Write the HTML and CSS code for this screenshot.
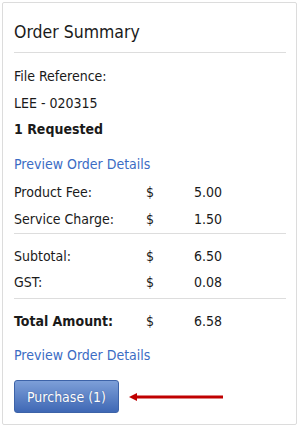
FILE: index.html
```html
<!DOCTYPE html>
<html>
<head>
<meta charset="utf-8">
<link rel="stylesheet" href="styles.css">
</head>
<body>
<div class="card">
  <h2 class="title">Order Summary</h2>
  <div class="info">
    <div class="line">File Reference:</div>
    <div class="line">LEE - 020315</div>
    <div class="line bold">1 Requested</div>
  </div>
  <a class="link first" href="#">Preview Order Details</a>
  <div class="group g1">
    <div class="row"><span class="lbl">Product Fee:</span><span class="cur">$</span><span class="amt">5.00</span></div>
    <div class="row"><span class="lbl">Service Charge:</span><span class="cur">$</span><span class="amt">1.50</span></div>
  </div>
  <div class="group g2">
    <div class="row"><span class="lbl">Subtotal:</span><span class="cur">$</span><span class="amt">6.50</span></div>
    <div class="row"><span class="lbl">GST:</span><span class="cur">$</span><span class="amt">0.08</span></div>
  </div>
  <div class="group g3">
    <div class="row total"><span class="lbl">Total Amount:</span><span class="cur">$</span><span class="amt">6.58</span></div>
  </div>
  <a class="link second" href="#">Preview Order Details</a>
  <div class="actions">
    <button class="btn">Purchase (1)</button>
    <svg class="arrow" width="94" height="10" viewBox="0 0 94 10">
      <polygon points="0,5 8,1 8,9" fill="#c00000"/>
      <rect x="6" y="3.5" width="88" height="3" fill="#c00000"/>
    </svg>
  </div>
</div>
</body>
</html>
```
FILE: styles.css
```css
html, body {
  margin: 0;
  padding: 0;
  background: #fff;
}
body {
  font-family: "DejaVu Sans Condensed", "DejaVu Sans", sans-serif;
  font-size: 14px;
  color: #1a1a1a;
}
.card {
  margin: 2px 0 0 2px;
  width: 295px;
  height: 423px;
  box-sizing: border-box;
  border: 1px solid #dcdcdc;
  border-radius: 2px;
  padding: 0 10px 0 11px;
}
.title {
  margin: 0;
  padding: 18px 0 9px 0;
  font-size: 17.5px;
  font-weight: normal;
  line-height: 22px;
  border-bottom: 1px solid #dddddd;
}
.info {
  margin-top: 10px;
}
.line {
  line-height: 26.5px;
}
.bold { font-weight: bold; }
.link {
  display: block;
  color: #3b6cc4;
  text-decoration: none;
  line-height: 26.5px;
}
.first { margin: 8px 0 2px 0; }
.second { margin-top: 7.5px; }
.row {
  display: grid;
  grid-template-columns: 132px 48px 1fr;
  line-height: 26.5px;
}
.total .lbl { font-weight: bold; }
.group {
  border-bottom: 1px solid #dddddd;
}
.g1 { padding-bottom: 1px; }
.g2 { padding-top: 8.5px; padding-bottom: 2.5px; }
.g3 { border-bottom: none; padding-top: 9px; }
.actions {
  display: flex;
  align-items: center;
  gap: 10px;
  margin-top: 11.5px;
}
.btn {
  font-family: inherit;
  font-size: 14px;
  color: #fff;
  width: 105px;
  height: 33px;
  border: 1px solid #3d63a8;
  border-radius: 3px;
  background: linear-gradient(#7d9fd8, #3f68b5);
  text-shadow: 0 0 1px rgba(20, 40, 90, 0.5);
  padding: 0;
}
.arrow { display: block; }
```
